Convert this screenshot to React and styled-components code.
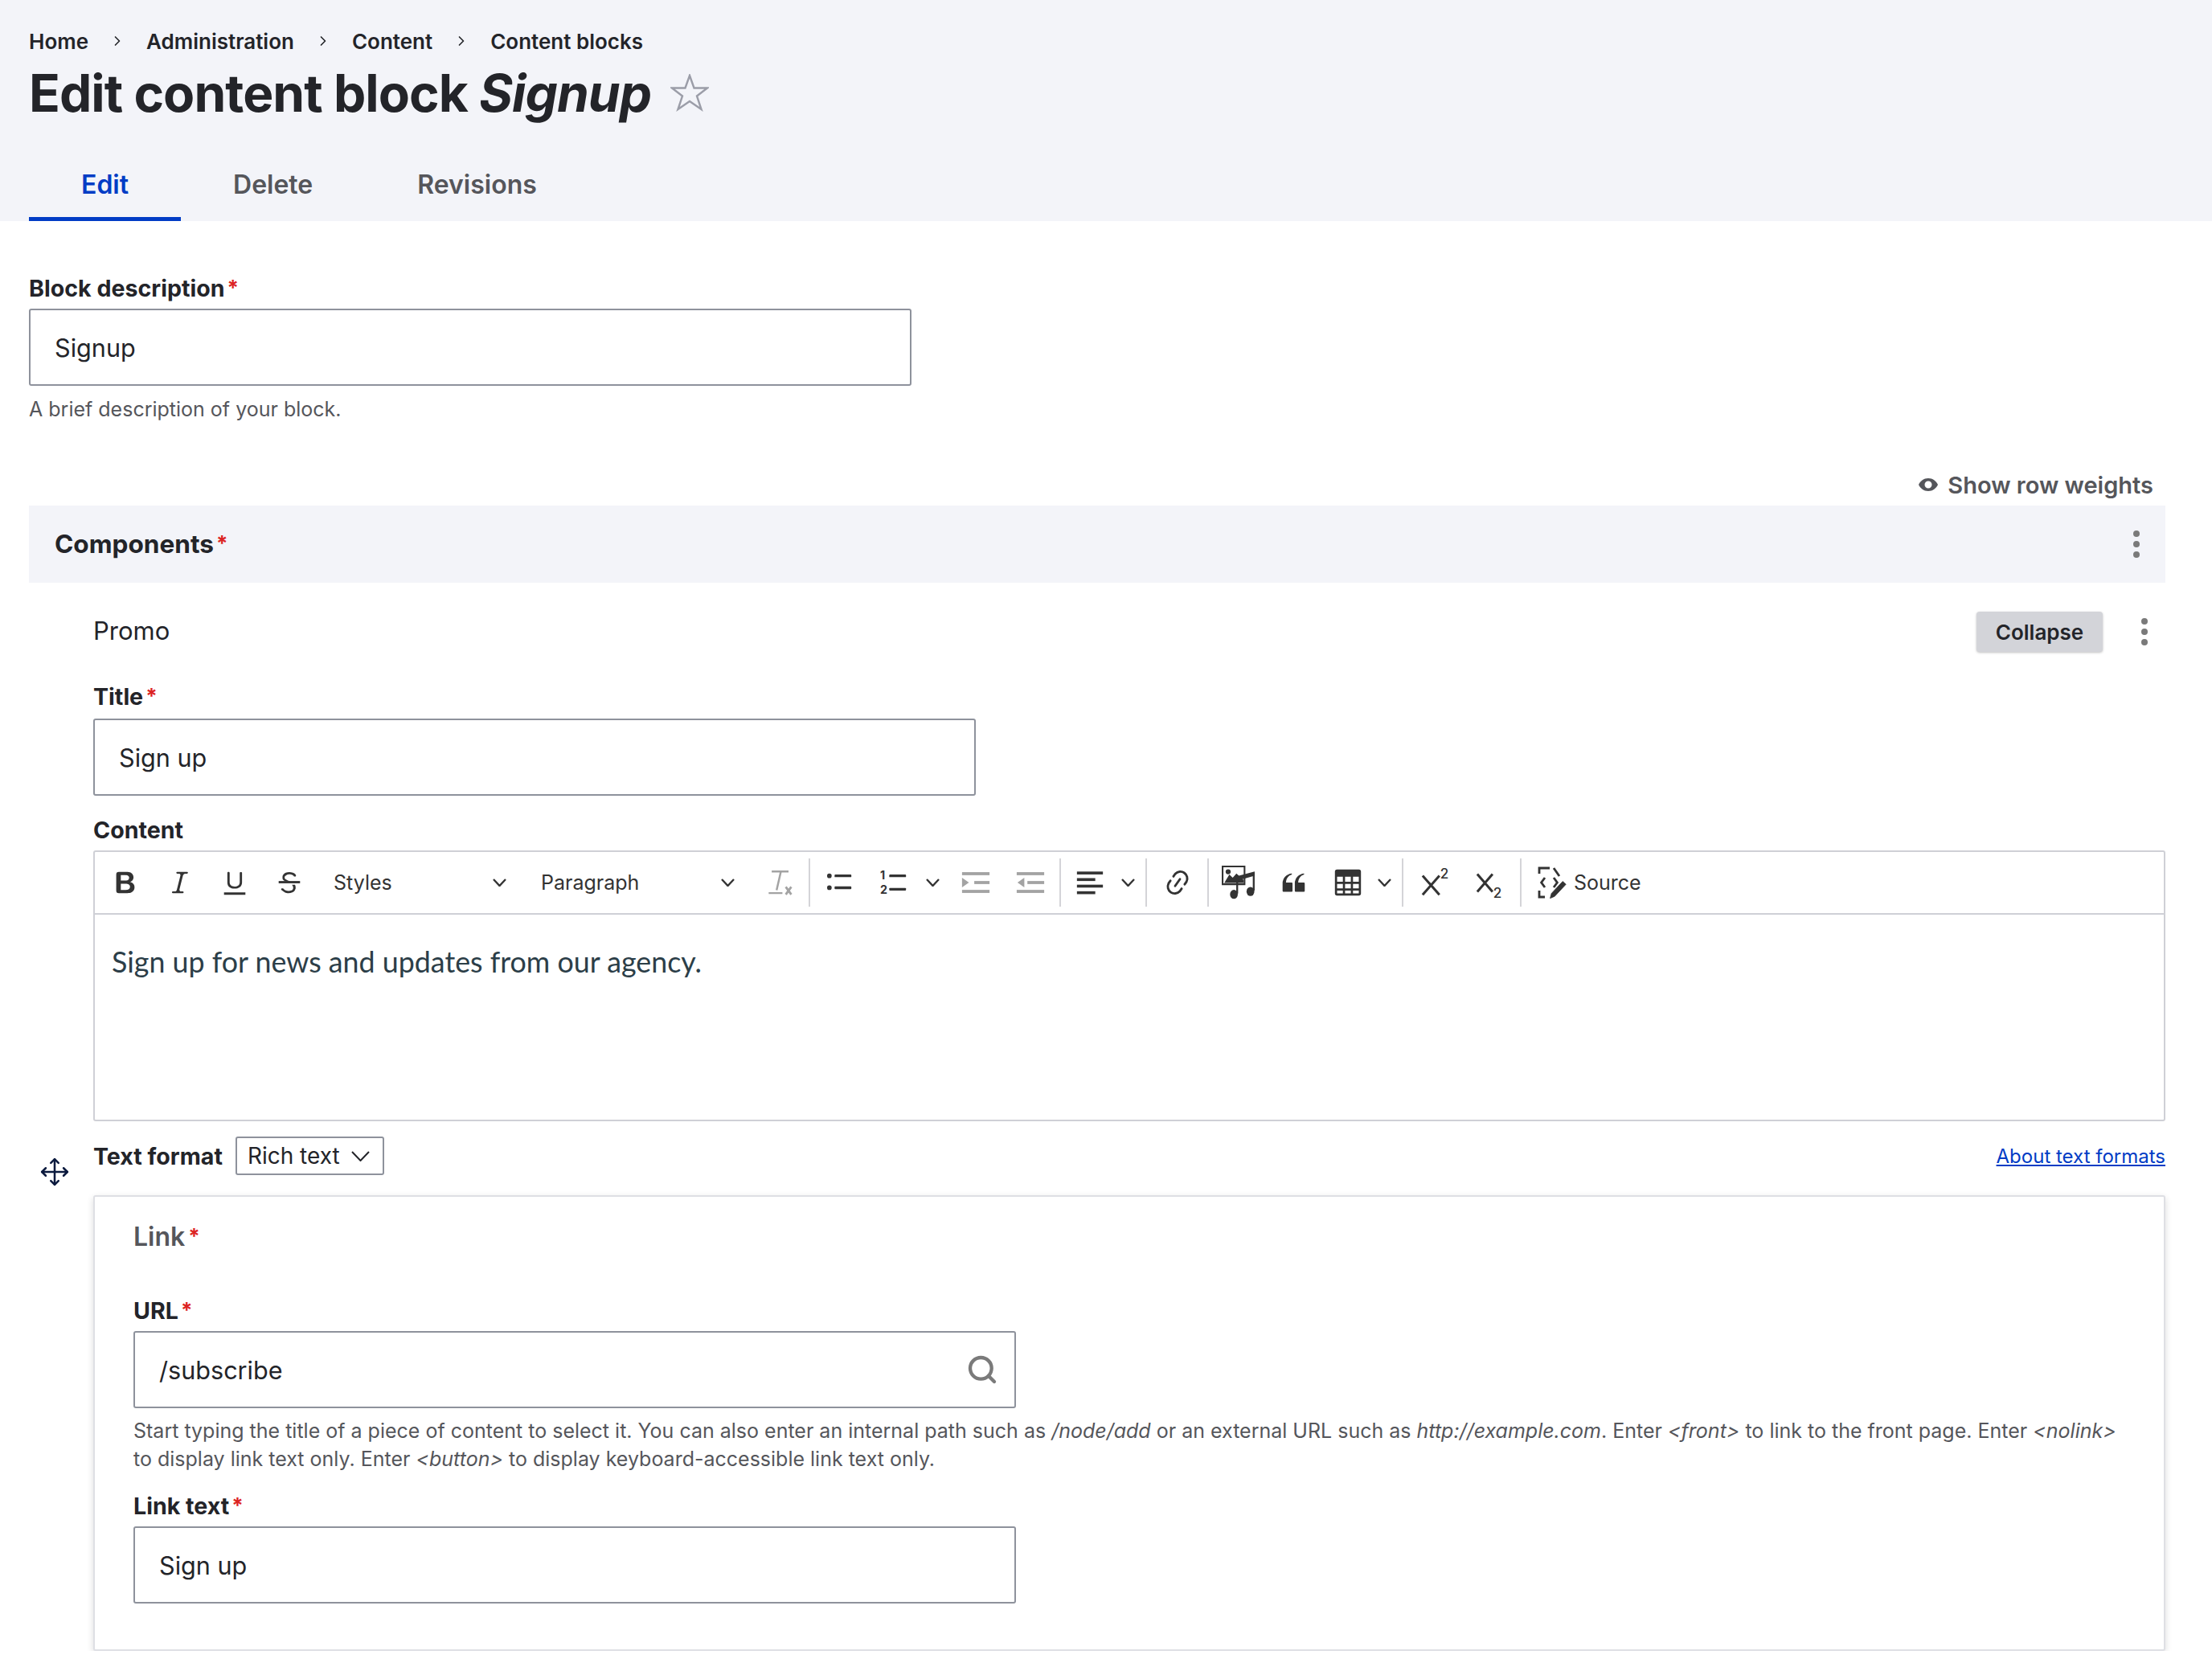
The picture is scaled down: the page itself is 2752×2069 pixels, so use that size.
import React from 'react';
import styled, { createGlobalStyle } from 'styled-components';
import { ChevronRight, Move, Search } from 'lucide-react';

const GlobalStyle = createGlobalStyle`
    * {
        box-sizing: border-box;
    }

    body {
        margin: 0;
        background: #fff;
        color: #232429;
        font-family: Inter, 'Liberation Sans', sans-serif;
    }
`;

const Header = styled.header`
    height: 275px;
    padding: 32px 0 0 36px;
    display: flex;
    flex-direction: column;
    background: #f3f4f9;
`;

const Breadcrumb = styled.nav`
    height: 38px;
    display: flex;
    align-items: center;
    gap: 26px;
    font-size: 26px;
    font-weight: 600;
    color: #232429;
`;

const TitleRow = styled.div`
    height: 72px;
    margin-top: 10px;
    display: flex;
    align-items: center;
    gap: 24px;
`;

const Title = styled.h1`
    margin: 0;
    font-size: 64px;
    line-height: 72px;
    font-weight: 700;
    letter-spacing: -0.95px;
    color: #232429;
`;

const Tabs = styled.div`
    margin-top: auto;
    display: flex;
`;

const Tab = styled.a`
    height: 90px;
    padding: 3px 65px 0;
    display: flex;
    align-items: center;
    font-size: 32px;
    font-weight: 600;
    color: ${(p) => (p.$active ? '#003cc5' : '#55565b')};
    border-bottom: 5px solid ${(p) => (p.$active ? '#003cc5' : 'transparent')};
`;

const Main = styled.main`
    padding: 63px 58px 0 36px;
`;

const Label = styled.label`
    height: 40px;
    display: flex;
    align-items: center;
    gap: 3px;
    font-size: 28.6px;
    font-weight: 700;
    color: #232429;
`;

const Required = styled.span`
    color: #dc2323;
    font-size: 26px;
    font-weight: 700;
    line-height: 1;
`;

const InputBox = styled.div`
    position: relative;
    width: 1098px;
    height: 96px;
    margin-top: ${(p) => p.$top || 6}px;
    padding: 0 30px;
    display: flex;
    align-items: center;
    justify-content: space-between;
    font-size: 30.6px;
    color: #232429;
    background: #fff;
    border: 2px solid #8e929c;
    border-radius: 3px;
`;

const SearchIcon = styled(Search)`
    margin-right: -10px;
`;

const Help = styled.div`
    margin-top: ${(p) => p.$top || 12}px;
    font-size: 25px;
    line-height: 35px;
    color: #55565b;
`;

const WeightsRow = styled.div`
    height: 40px;
    margin-top: 56px;
    padding-right: 15px;
    display: flex;
    align-items: center;
    justify-content: flex-end;
    gap: 12px;
    font-size: 29px;
    font-weight: 600;
    color: #55565b;
`;

const ComponentsBar = styled.div`
    height: 96px;
    margin-top: 6px;
    padding: 0 32px;
    display: flex;
    align-items: center;
    justify-content: space-between;
    background: #f3f4f9;
`;

const BarTitle = styled.div`
    margin-top: -2px;
    display: flex;
    align-items: center;
    gap: 3px;
    font-size: 31.6px;
    font-weight: 700;
`;

const Kebab = styled.div`
    display: flex;
    flex-direction: column;
    gap: 5px;

    i {
        width: 8px;
        height: 8px;
        border-radius: 50%;
        background: #7a7a7a;
    }
`;

const Item = styled.section`
    position: relative;
    padding-left: 80px;
`;

const ItemHead = styled.div`
    height: 50px;
    margin-top: 36px;
    padding-right: 22px;
    display: flex;
    align-items: center;
`;

const ItemName = styled.div`
    flex: 1;
    margin-top: -3px;
    font-size: 31px;
    color: #232429;
`;

const CollapseButton = styled.button`
    width: 157px;
    height: 50px;
    margin-right: 48px;
    border: 0;
    border-radius: 4px;
    background: #d3d4d9;
    box-shadow: 0 1px 3px rgb(0 0 0 / 25%);
    font-family: inherit;
    font-size: 26px;
    font-weight: 600;
    color: #232429;
`;

const Editor = styled.div`
    height: 337px;
    margin-top: 6px;
    border: 2px solid #cfd0d6;
    border-radius: 3px;
`;

const Toolbar = styled.div`
    height: 78px;
    padding-left: 4px;
    display: flex;
    align-items: center;
    border-bottom: 2px solid #cfd0d6;
`;

const ToolButton = styled.span`
    flex: none;
    width: ${(p) => p.$w || 68}px;
    height: 60px;
    padding-right: ${(p) => p.$pr || 0}px;
    display: flex;
    align-items: center;
    justify-content: ${(p) => p.$justify || 'center'};
    color: ${(p) => (p.$off ? '#a3a3a3' : '#333')};

    svg {
        display: block;
        flex: none;
    }
`;

const ToolDropdown = styled.span`
    flex: none;
    width: ${(p) => p.$w}px;
    height: 60px;
    padding: 0 22px 0 21px;
    display: flex;
    align-items: center;
    justify-content: space-between;
    font-size: 25px;
    color: #333;
`;

const ToolSeparator = styled.span`
    flex: none;
    width: 2px;
    height: 60px;
    margin: 0 ${(p) => p.$r || 2}px 0 ${(p) => p.$l || 2}px;
    background: #d4d4d8;
`;

const SourceText = styled.span`
    margin-left: 7px;
    font-size: 25px;
    color: #333;
`;

const EditorBody = styled.div`
    padding: 35px 21px;
    font-family: Lato, sans-serif;
    font-size: 35.8px;
    line-height: 48px;
    color: #2c3e48;
`;

const FormatRow = styled.div`
    height: 48px;
    margin-top: 19px;
    display: flex;
    align-items: center;
    gap: 16px;
`;

const FormatLabel = styled.span`
    font-size: 28.6px;
    font-weight: 700;
`;

const FormatSelect = styled.div`
    width: 185px;
    height: 48px;
    padding: 0 16px 0 13px;
    display: flex;
    align-items: center;
    justify-content: space-between;
    font-size: 28px;
    color: #232429;
    border: 2px solid #8e929c;
    border-radius: 3px;
`;

const FormatLink = styled.a`
    margin-left: auto;
    font-size: 24px;
    color: #003cc5;
    text-decoration: underline;
`;

const MoveHandle = styled.div`
    position: absolute;
    left: 13px;
    top: 678px;
    color: #0b1a3e;
`;

const Card = styled.div`
    height: 567px;
    margin-top: 25px;
    padding: 29px 49px 0 48px;
    background: #fff;
    border: 2px solid #dedfe4;
    border-radius: 3px;
    box-shadow: 0 3px 8px rgb(0 0 0 / 14%);
`;

const CardTitle = styled.div`
    height: 40px;
    display: flex;
    align-items: center;
    gap: 4px;
    font-size: 32px;
    font-weight: 600;
    color: #55565b;
`;

const Spaced = styled.div`
    margin-top: ${(p) => p.$top}px;
`;

const BoldIcon = () => (
    <svg width="38" height="38" viewBox="0 0 20 20" fill="currentColor">
        <path d="M10.187 17H5.773c-.637 0-1.092-.138-1.364-.415-.273-.277-.409-.718-.409-1.323V4.738c0-.617.14-1.062.419-1.332.279-.27.73-.406 1.354-.406h4.68c.69 0 1.288.041 1.793.124.506.083.96.242 1.36.478.341.197.644.447.906.75a3.262 3.262 0 0 1 .808 2.162c0 1.401-.722 2.426-2.167 3.075C15.05 10.175 16 11.315 16 13.01a3.756 3.756 0 0 1-2.296 3.504 6.1 6.1 0 0 1-1.517.377c-.571.073-1.238.11-2 .11zm-.217-6.217H7v4.087h3.069c1.977 0 2.965-.69 2.965-2.072 0-.707-.256-1.22-.768-1.537-.512-.319-1.277-.478-2.296-.478zM7 5.13v3.619h2.606c.729 0 1.292-.067 1.69-.2a1.6 1.6 0 0 0 .91-.765c.165-.267.247-.566.247-.897 0-.707-.26-1.176-.778-1.409-.519-.232-1.31-.348-2.375-.348H7z" />
    </svg>
);

const ItalicIcon = () => (
    <svg width="38" height="38" viewBox="0 0 20 20" fill="currentColor">
        <path d="m9.586 14.633.021.004c-.036.335.095.655.393.962.082.083.173.15.274.201h1.474a.6.6 0 1 1 0 1.2H5.304a.6.6 0 0 1 0-1.2h1.15c.474-.07.809-.182 1.005-.334.157-.122.291-.32.404-.597l2.416-9.55a1.053 1.053 0 0 0-.281-.823 1.12 1.12 0 0 0-.442-.296H8.15a.6.6 0 0 1 0-1.2h6.443a.6.6 0 1 1 0 1.2h-1.195c-.376.056-.65.155-.823.296-.215.175-.423.439-.623.79l-2.366 9.347z" />
    </svg>
);

const UnderlineIcon = () => (
    <svg width="38" height="38" viewBox="0 0 20 20" fill="currentColor">
        <path d="M3 18v-1.5h14V18zm2.2-8V3.6c0-.4.4-.6.8-.6.3 0 .7.2.7.6v6.2c0 2 1.3 2.8 3.2 2.8 1.9 0 3.4-.9 3.4-2.9V3.6c0-.3.4-.5.8-.5.3 0 .7.2.7.5V10c0 2.7-2.2 4-4.9 4-2.6 0-4.7-1.2-4.7-4z" />
    </svg>
);

const StrikeIcon = () => (
    <svg width="38" height="38" viewBox="0 0 20 20" fill="currentColor">
        <path d="M7 16.4c-.8-.4-1.5-.9-2.2-1.5a.6.6 0 0 1-.2-.5l.3-.6h1c1 1.2 2.1 1.7 3.7 1.7 1 0 1.8-.3 2.3-.6.6-.4.6-1.2.6-1.3.2-1.2-.9-2.1-.9-2.1h2.1c.3.7.4 1.2.4 1.7v.8l-.6 1.2c-.6.8-1.1 1-1.6 1.2a6 6 0 0 1-2.4.6c-1 0-1.8-.3-2.5-.6zM6.8 9 6 8.3c-.4-.5-.5-.8-.5-1.6 0-.7.1-1.3.5-1.8.4-.6 1-1 1.6-1.3a6.3 6.3 0 0 1 4.7 0 4 4 0 0 1 1.7 1l.3.7c0 .1.2.4-.2.7-.4.2-.9.1-1 0a3 3 0 0 0-1.2-1c-.4-.2-1-.3-2-.4-.7 0-1.4.2-2 .6-.8.6-1 .8-1 1.500 0 .8.5 1 1.2 1.500.6.2 1.100.7 2.700 1.200h-3z" />
        <path d="M3 10.500V9h14v1.500z" />
    </svg>
);

const ClearIcon = () => (
    <svg width="38" height="38" viewBox="0 0 20 20" fill="none" stroke="currentColor">
        <path d="M4.800 2.800h11M10.800 2.800 8 15M2.800 16.900h9" strokeWidth="1.300" />
        <path d="m14 12.800 3.600 5m0-5-3.600 5" strokeWidth="1.500" />
    </svg>
);

const BulletIcon = () => (
    <svg width="38" height="38" viewBox="0 0 20 20" fill="currentColor">
        <circle cx="3.600" cy="5.600" r="1.500" />
        <circle cx="3.600" cy="13.400" r="1.500" />
        <rect x="7" y="4.700" width="11" height="1.800" rx=".5" />
        <rect x="7" y="12.500" width="11" height="1.800" rx=".5" />
    </svg>
);

const NumberIcon = () => (
    <svg width="38" height="38" viewBox="0 0 20 20" fill="currentColor">
        <text x="1" y="8" fontSize="7.500" fontWeight="700" fontFamily="Inter, sans-serif">1</text>
        <text x="1" y="17.500" fontSize="7.500" fontWeight="700" fontFamily="Inter, sans-serif">2</text>
        <rect x="7" y="4.700" width="11" height="1.800" rx=".5" />
        <rect x="7" y="13.500" width="11" height="1.800" rx=".5" />
    </svg>
);

const IndentIcon = ({ out }) => (
    <svg width="38" height="38" viewBox="0 0 20 20" fill="currentColor">
        <rect x="1" y="3.200" width="18" height="2" />
        <rect x="1" y="14.800" width="18" height="2" />
        {out ? (
            <>
                <rect x="8" y="9" width="11" height="2" />
                <path d="M6 6.800v6.400L1.500 10z" />
            </>
        ) : (
            <>
                <rect x="9" y="9" width="10" height="2" />
                <path d="M1 6.800v6.400L5.500 10z" />
            </>
        )}
    </svg>
);

const AlignIcon = () => (
    <svg width="38" height="38" viewBox="0 0 20 20" fill="currentColor">
        <rect x="1.500" y="2.800" width="17" height="1.900" />
        <rect x="1.500" y="7.100" width="12" height="1.900" />
        <rect x="1.500" y="11.400" width="17" height="1.900" />
        <rect x="1.500" y="15.700" width="12" height="1.900" />
    </svg>
);

const LinkIcon = () => (
    <svg width="38" height="38" viewBox="0 0 20 20" fill="currentColor">
        <path d="m11.077 15 .991-1.416a.75.75 0 1 1 1.229.86l-1.148 1.64a.748.748 0 0 1-.217.206 5.251 5.251 0 0 1-8.503-5.955.741.741 0 0 1 .12-.274l1.147-1.639a.75.75 0 1 1 1.228.86L4.933 10.7l.006.003a3.75 3.75 0 0 0 6.132 4.294l.006.004zm5.494-5.335a.748.748 0 0 1-.12.274l-1.147 1.639a.75.75 0 1 1-1.228-.86l.86-1.23a3.75 3.75 0 0 0-6.144-4.301l-.86 1.229a.75.75 0 0 1-1.229-.86l1.148-1.64a.748.748 0 0 1 .217-.206 5.251 5.251 0 0 1 8.503 5.955zm-4.563-2.532a.75.75 0 0 1 .184 1.045l-3.155 4.505a.75.75 0 1 1-1.229-.86l3.155-4.506a.75.75 0 0 1 1.045-.184z" />
    </svg>
);

const MediaIcon = () => (
    <svg width="42" height="42" viewBox="0 0 20 20" fill="currentColor">
        <path fillRule="evenodd" d="M0 0h14v11.500H0zM1 1v9.500h12V1z" />
        <circle cx="3.800" cy="3.600" r="1.500" />
        <path d="m1.500 10.200 3-5 2 2 2.200-2.600 4.300 4v1.600z" />
        <path d="M8 6.500 19.500 3.400v2.600L9.500 8.800z" />
        <path d="M8.600 7h1.100v9.600H8.600zM18.400 4h1.100v10.800h-1.100z" />
        <ellipse cx="7.200" cy="17" rx="2.300" ry="2.700" />
        <ellipse cx="17" cy="15.300" rx="2.300" ry="2.700" />
    </svg>
);

const QuoteIcon = () => (
    <svg width="38" height="38" viewBox="0 0 20 20" fill="currentColor">
        <path d="M3 10.423a6.5 6.5 0 0 1 6.056-6.408l.038.67C6.448 5.423 5.354 7.663 5.220 10H9c.552 0 .5.432.5.986v4.511c0 .554-.448.503-1 .503h-5c-.552 0-.5-.449-.5-1.003v-4.574zm8 0a6.5 6.5 0 0 1 6.056-6.408l.038.67c-2.646.739-3.740 2.979-3.873 5.315H17c.552 0 .5.432.5.986v4.511c0 .554-.448.503-1 .503h-5c-.552 0-.5-.449-.5-1.003v-4.574z" />
    </svg>
);

const TableIcon = () => (
    <svg width="36" height="36" viewBox="0 0 20 20" fill="currentColor">
        <path
            fillRule="evenodd"
            d="M2.500 1h15A1.500 1.500 0 0 1 19 2.500v15a1.500 1.500 0 0 1-1.500 1.500h-15A1.500 1.500 0 0 1 1 17.500v-15A1.500 1.500 0 0 1 2.500 1zM2.500 6v3.500h4V6zm5.500 0v3.500h4V6zm5.500 0v3.500h4V6zM2.500 11v3h4v-3zm5.500 0v3h4v-3zm5.500 0v3h4v-3zM2.500 15.500v2h4v-2zm5.500 0v2h4v-2zm5.500 0v2h4v-2z"
        />
    </svg>
);

const ScriptIcon = ({ sub }) => (
    <svg width="38" height="38" viewBox="0 0 20 20" overflow="visible">
        <path
            d={sub ? 'm1 4.500 10 11.500m0-11.500L1 16' : 'm1 5.500 11 12.500m0-12.500L1 18'}
            fill="none"
            stroke="currentColor"
            strokeWidth="1.600"
        />
        <text
            x={sub ? 11.5 : 12.5}
            y={sub ? 20 : 7.5}
            fontSize="9"
            fontWeight="500"
            fontFamily="Inter, sans-serif"
            fill="currentColor"
        >
            2
        </text>
    </svg>
);

const SourceIcon = () => (
    <svg width="40" height="40" viewBox="0 0 20 20" fill="none" stroke="currentColor">
        <path d="M5.500 7 3.300 10l2.200 3M11 7l2.200 3-2.200 3" strokeWidth="1.400" />
        <path d="M8.500 1H2v3.500M2 15v4h3.500M11 1l3.500 5" strokeWidth="1.400" />
        <path d="m8.800 19.800.8-3 7-7.500 2 1.800-7 7.500z" fill="currentColor" strokeWidth=".4" />
    </svg>
);

const EyeIcon = () => (
    <svg width="24" height="16" viewBox="0 0 24 16" fill="#55565b">
        <path
            fillRule="evenodd"
            d="M12 0c5.500 0 9.800 3.300 12 8-2.200 4.700-6.500 8-12 8S2.200 12.700 0 8c2.200-4.700 6.500-8 12-8zm0 3.500a4.500 4.500 0 1 0 0 9 4.500 4.500 0 0 0 0-9z"
        />
    </svg>
);

const StarIcon = () => (
    <svg width="48" height="48" viewBox="0 1 48 48" fill="none" stroke="#9b9da8" strokeWidth="2.400">
        <path d="M24 3 29.500 18.500H46L33 28.500 38.500 45 24 35 9.500 45 15 28.500 2 18.500H18.500z" />
    </svg>
);

const Chevron = ({ width = 17, height = 10, stroke = 2.4 }) => (
    <svg width={width} height={height} viewBox={`0 0 ${width} ${height}`} fill="none" stroke="currentColor" strokeWidth={stroke}>
        <path d={`M1 1l${width / 2 - 1} ${height - 2} ${width / 2 - 1} ${-(height - 2)}`} />
    </svg>
);

const Dots = () => (
    <Kebab>
        <i />
        <i />
        <i />
    </Kebab>
);

const App = () => {
    return (
        <>
            <GlobalStyle />
            <Header>
                <Breadcrumb>
                    <span>Home</span>
                    <ChevronRight size={20} strokeWidth={2} />
                    <span>Administration</span>
                    <ChevronRight size={20} strokeWidth={2} />
                    <span>Content</span>
                    <ChevronRight size={20} strokeWidth={2} />
                    <span>Content blocks</span>
                </Breadcrumb>
                <TitleRow>
                    <Title>
                        Edit content block <em>Signup</em>
                    </Title>
                    <StarIcon />
                </TitleRow>
                <Tabs>
                    <Tab $active>Edit</Tab>
                    <Tab>Delete</Tab>
                    <Tab>Revisions</Tab>
                </Tabs>
            </Header>
            <Main>
                <Label>
                    Block description<Required>*</Required>
                </Label>
                <InputBox>Signup</InputBox>
                <Help>A brief description of your block.</Help>
                <WeightsRow>
                    <EyeIcon />
                    Show row weights
                </WeightsRow>
                <ComponentsBar>
                    <BarTitle>
                        Components<Required>*</Required>
                    </BarTitle>
                    <Dots />
                </ComponentsBar>
                <Item>
                    <MoveHandle>
                        <Move size={38} strokeWidth={1.6} />
                    </MoveHandle>
                    <ItemHead>
                        <ItemName>Promo</ItemName>
                        <CollapseButton>Collapse</CollapseButton>
                        <Dots />
                    </ItemHead>
                    <Spaced $top={35}>
                        <Label>
                            Title<Required>*</Required>
                        </Label>
                    </Spaced>
                    <InputBox $top={8}>Sign up</InputBox>
                    <Spaced $top={22}>
                        <Label>Content</Label>
                    </Spaced>
                    <Editor>
                        <Toolbar>
                            <ToolButton><BoldIcon /></ToolButton>
                            <ToolButton><ItalicIcon /></ToolButton>
                            <ToolButton><UnderlineIcon /></ToolButton>
                            <ToolButton><StrikeIcon /></ToolButton>
                            <ToolDropdown $w={258}>
                                Styles
                                <Chevron />
                            </ToolDropdown>
                            <ToolDropdown $w={284}>
                                Paragraph
                                <Chevron />
                            </ToolDropdown>
                            <ToolButton $off><ClearIcon /></ToolButton>
                            <ToolSeparator />
                            <ToolButton><BulletIcon /></ToolButton>
                            <ToolButton><NumberIcon /></ToolButton>
                            <ToolButton $w={34} $pr={5}><Chevron /></ToolButton>
                            <ToolButton $off><IndentIcon /></ToolButton>
                            <ToolButton $off><IndentIcon out /></ToolButton>
                            <ToolSeparator />
                            <ToolButton><AlignIcon /></ToolButton>
                            <ToolButton $w={33} $pr={7}><Chevron /></ToolButton>
                            <ToolSeparator />
                            <ToolButton $w={71}><LinkIcon /></ToolButton>
                            <ToolSeparator $r={3} />
                            <ToolButton><MediaIcon /></ToolButton>
                            <ToolButton><QuoteIcon /></ToolButton>
                            <ToolButton><TableIcon /></ToolButton>
                            <ToolButton $w={31} $pr={8}><Chevron /></ToolButton>
                            <ToolSeparator $r={7} />
                            <ToolButton><ScriptIcon /></ToolButton>
                            <ToolButton><ScriptIcon sub /></ToolButton>
                            <ToolSeparator />
                            <ToolButton $w={56} $justify="flex-end"><SourceIcon /></ToolButton>
                            <SourceText>Source</SourceText>
                        </Toolbar>
                        <EditorBody>Sign up for news and updates from our agency.</EditorBody>
                    </Editor>
                    <FormatRow>
                        <FormatLabel>Text format</FormatLabel>
                        <FormatSelect>
                            Rich text
                            <Chevron width={23} height={13} stroke={2} />
                        </FormatSelect>
                        <FormatLink>About text formats</FormatLink>
                    </FormatRow>
                    <Card>
                        <CardTitle>
                            Link<Required>*</Required>
                        </CardTitle>
                        <Spaced $top={52}>
                            <Label>
                                URL<Required>*</Required>
                            </Label>
                        </Spaced>
                        <InputBox>
                            /subscribe
                            <SearchIcon size={40} color="#7a7a7a" strokeWidth={2.6} />
                        </InputBox>
                        <Help $top={11}>
                            Start typing the title of a piece of content to select it. You can also enter an
                            internal path such as <em>/node/add</em> or an external URL such as{' '}
                            <em>http://example.com</em>. Enter <em>&lt;front&gt;</em> to link to the front page.
                            Enter <em>&lt;nolink&gt;</em> to display link text only. Enter{' '}
                            <em>&lt;button&gt;</em> to display keyboard-accessible link text only.
                        </Help>
                        <Spaced $top={20}>
                            <Label>
                                Link text<Required>*</Required>
                            </Label>
                        </Spaced>
                        <InputBox>Sign up</InputBox>
                    </Card>
                </Item>
            </Main>
        </>
    );
};

export default App;
